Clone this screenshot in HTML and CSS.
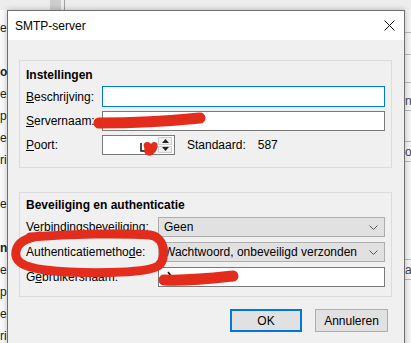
FILE: index.html
```html
<!DOCTYPE html>
<html lang="nl">
<head>
  <meta charset="UTF-8">
  <title>SMTP-server</title>
<link rel="stylesheet" href="styles.css">
</head>
<body>
<div class="desktop">
  <div class="bg-top">
    <span class="bg-side"></span>
    <span class="bg-scroll"></span>
  </div>
  <div class="bg-main">
    <div class="bg-left">
      <div class="bg-line">e</div>
      <div class="bg-line"></div>
      <div class="bg-line bold">o</div>
      <div class="bg-line">e</div>
      <div class="bg-line">p</div>
      <div class="bg-line">e</div>
      <div class="bg-line">ri</div>
      <div class="bg-line"></div>
      <div class="bg-line">e</div>
      <div class="bg-line"></div>
      <div class="bg-line bold">n</div>
      <div class="bg-line">e</div>
      <div class="bg-line">p</div>
      <div class="bg-line">e</div>
      <div class="bg-line">ri</div>
    </div>
    <div class="bg-gap"></div>
    <div class="bg-right">
      <div class="cell" style="height:23px"></div>
      <div class="cell" style="height:22px"></div>
      <div class="cell" style="height:28px"></div>
      <div class="cell" style="height:28px">n</div>
      <div class="cell" style="height:31px"></div>
      <div class="cell" style="height:20px">o</div>
      <div class="cell" style="height:98px"></div>
      <div class="cell" style="height:20px">a</div>
    </div>
  </div>

  <div class="dialog">
    <div class="titlebar">
      <span class="title">SMTP-server</span>
      <svg class="close" width="11" height="11" viewBox="0 0 11 11">
        <path d="M0.5 0.5 L10.5 10.5 M10.5 0.5 L0.5 10.5" stroke="#111" stroke-width="1" fill="none"/>
      </svg>
    </div>
    <div class="content">
      <div class="group g1">
        <div class="legend">Instellingen</div>
        <div class="form f1">
          <label><u>B</u>eschrijving:</label>
          <div class="input focus"></div>
          <label><u>S</u>ervernaam:</label>
          <div class="input"></div>
          <label><u>P</u>oort:</label>
          <div class="port-row">
            <div class="spin">
              <div class="spin-btns">
                <span class="spin-btn"><svg width="7" height="4" viewBox="0 0 7 4"><path d="M3.5 0 L7 4 L0 4 Z" fill="#222"/></svg></span>
                <span class="spin-btn"><svg width="7" height="4" viewBox="0 0 7 4"><path d="M0 0 L7 0 L3.5 4 Z" fill="#222"/></svg></span>
              </div>
            </div>
            <span class="std">Standaard:</span>
            <span>587</span>
          </div>
        </div>
      </div>

      <div class="group g2">
        <div class="legend">Beveiliging en authenticatie</div>
        <div class="form f2">
          <label>Verbindingsbeveiliging:</label>
          <div class="select"><span>Geen</span><svg width="9" height="5" viewBox="0 0 9 5"><path d="M0.5 0.5 L4.5 4.5 L8.5 0.5" stroke="#555" fill="none"/></svg></div>
          <label>Authenticatiemetho<u>d</u>e:</label>
          <div class="select"><span>Wachtwoord, onbeveiligd verzonden</span><svg width="9" height="5" viewBox="0 0 9 5"><path d="M0.5 0.5 L4.5 4.5 L8.5 0.5" stroke="#555" fill="none"/></svg></div>
          <label>G<u>e</u>bruikersnaam:</label>
          <div class="input"></div>
        </div>
      </div>

      <div class="buttons">
        <button class="btn default">OK</button>
        <button class="btn">Annuleren</button>
      </div>
    </div>
  </div>

  <!-- red marker scribbles drawn over the screenshot -->
  <svg class="scribbles" width="411" height="343" viewBox="0 0 411 343">
    <path d="M141 143 L141 151 L147 151" stroke="#111" stroke-width="1.5" fill="none"/>
    <path d="M168 272 L171 276" stroke="#111" stroke-width="1.5" fill="none"/>
    <g stroke="#e42c1c" fill="none" stroke-linecap="round" stroke-linejoin="round">
      <path d="M99 123 C130 123 170 121 200 118" stroke-width="11"/>
      <path d="M164 280 C190 281 215 278 233 276" stroke-width="11"/>
      <path d="M30 237 C70 234 120 233 150 235 C166 237 167 260 158 266 C145 274 80 274 45 270 C22 267 14 261 16 251 C18 242 26 238 40 236" stroke-width="9"/>
    </g>
    <path d="M144 147 C142 141 150 141 151 144 C153 140 160 142 157 149 C155 154 150 157 147 155 C143 153 145 150 144 147 Z" fill="#e42c1c"/>
  </svg>
</div>
</body>
</html>
```

FILE: styles.css
```css
* {
  box-sizing: border-box;
}
html, body {
  margin: 0;
  padding: 0;
}
body {
  width: 411px;
  height: 343px;
  overflow: hidden;
  font-family: "Liberation Sans", Arial, sans-serif;
  font-size: 12px;
  color: #000;
  background: #f7f7f7;
}
.desktop {
  position: relative;
  width: 411px;
  height: 343px;
  overflow: hidden;
}

/* window behind the dialog */
.bg-top {
  height: 10px;
  display: flex;
  background: #ededed;
}
.bg-side {
  width: 50px;
}
.bg-scroll {
  width: 14px;
  background: #cdcdcd;
  border-right: 3px solid #ededed;
  box-shadow: 1px 0 0 #a0a0a0;
}
.bg-main {
  display: flex;
  height: 333px;
}
.bg-left {
  width: 7px;
  padding-top: 7px;
  background: #fafafa;
}
.bg-line {
  height: 22px;
  line-height: 22px;
  font-size: 12px;
  color: #222;
}
.bg-line.bold {
  font-weight: bold;
}
.bg-gap {
  flex: 1;
}
.bg-right {
  width: 7px;
  background: #f5f5f5;
}
.cell {
  border-bottom: 1px solid #b9b9b9;
  font-size: 12px;
  line-height: 18px;
  display: flex;
  align-items: flex-end;
  padding-left: 1px;
  color: #444;
}

/* dialog */
.dialog {
  position: absolute;
  left: 7px;
  top: 10px;
  width: 398px;
  height: 340px;
  border: 1px solid #707070;
  background: #f0f0f0;
  box-shadow: 0 0 6px rgba(0, 0, 0, 0.25);
}
.titlebar {
  height: 29px;
  background: #fff;
  display: flex;
  align-items: center;
  justify-content: space-between;
  padding: 0 9px 0 7px;
}
.close {
  display: block;
}
.content {
  padding: 20px 12px 0 11px;
}
.group {
  border: 1px solid #dcdcdc;
  padding: 6px 6px 12px 6px;
}
.g2 {
  margin-top: 24px;
  padding-top: 4px;
  padding-bottom: 9px;
}
.legend {
  font-weight: bold;
  line-height: 16px;
}
.form {
  display: grid;
  align-items: center;
  margin-top: 3px;
}
.f1 {
  grid-template-columns: 76px 1fr;
  grid-template-rows: 21px 20px 20px;
  row-gap: 4px;
}
.g2 .form {
  margin-top: 4px;
  grid-template-columns: 132px 1fr;
  grid-template-rows: 20px 20px 20px;
  row-gap: 5px;
}
label {
  white-space: nowrap;
}
.input {
  height: 100%;
  background: #fff;
  border: 1px solid #7a7a7a;
}
.input.focus {
  border-color: #0078d7;
}
.port-row {
  display: flex;
  align-items: center;
  height: 100%;
}
.spin {
  width: 73px;
  height: 100%;
  background: #fff;
  border: 1px solid #7a7a7a;
  display: flex;
  justify-content: flex-end;
  padding: 1px 2px 1px 0;
}
.spin-btns {
  width: 14px;
  display: flex;
  flex-direction: column;
  gap: 1px;
}
.spin-btn {
  flex: 1;
  background: #f0f0f0;
  border: 1px solid #cfcfcf;
  display: flex;
  align-items: center;
  justify-content: center;
}
.spin-btn svg {
  display: block;
}
.std {
  margin-left: 12px;
  margin-right: 12px;
}
.select {
  height: 100%;
  background: #e1e1e1;
  border: 1px solid #adadad;
  display: flex;
  align-items: center;
  justify-content: space-between;
  padding: 0 6px 0 5px;
  white-space: nowrap;
}
.select svg {
  display: block;
}
.buttons {
  display: flex;
  justify-content: flex-end;
  gap: 13px;
  margin-top: 12px;
  margin-right: 4px;
}
.btn {
  font-family: inherit;
  font-size: 12px;
  color: #000;
  height: 23px;
  width: 73px;
  padding: 0;
  background: #e1e1e1;
  border: 1px solid #adadad;
  border-radius: 0;
}
.btn.default {
  width: 72px;
  border: 2px solid #0078d7;
}

.scribbles {
  position: absolute;
  left: 0;
  top: 0;
  pointer-events: none;
}
```
